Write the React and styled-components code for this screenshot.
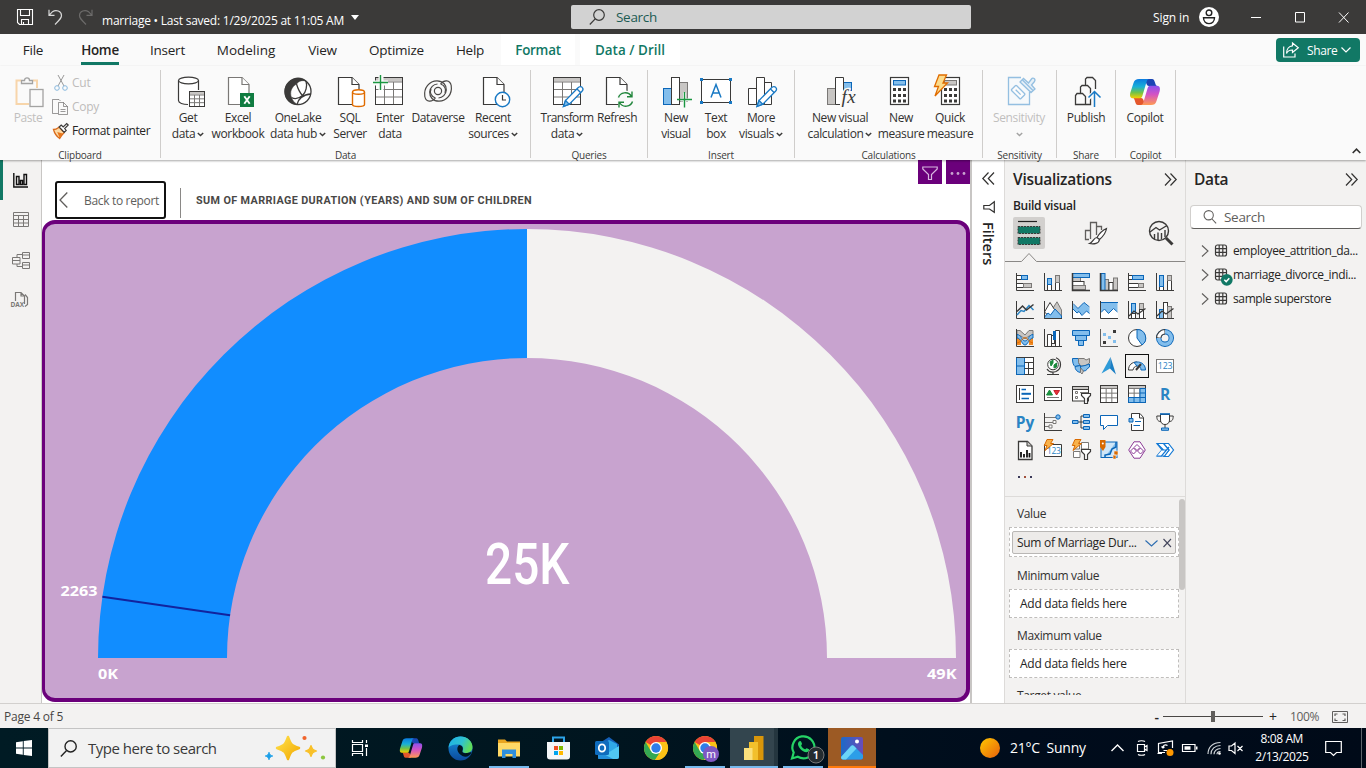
import React from "react";
import styled, { createGlobalStyle } from "styled-components";

const K = "#3b3a39";
const B = "#0b66b8";
const F = "#83beec";
const G = "#7a7876";
const L = "#c8c6c4";
const GREEN = "#117865";
const PURPLE = "#6b007b";

const GlobalStyle = createGlobalStyle`
  * { box-sizing: border-box; }
  html, body { margin: 0; padding: 0; }
  body {
    width: 1366px; height: 768px; overflow: hidden;
    font-family: "Open Sans", "Noto Sans", sans-serif;
    font-size: 12px; color: #252423; letter-spacing: -0.25px;
  }
  svg { display: block; flex: none; overflow: visible; }
`;

const Text = styled.span`
  display: block;
  flex: none;
  white-space: pre;
  font-size: ${(p) => p.$size || 12}px;
  font-weight: ${(p) => p.$weight || 400};
  letter-spacing: ${(p) => (p.$ls === undefined ? -0.25 : p.$ls)}px;
  line-height: ${(p) => p.$lh || 16}px;
  color: ${(p) => p.$color || "#252423"};
  margin-left: ${(p) => p.$ml || 0}px;
  padding-top: ${(p) => p.$pt || 0}px;
`;
const Spacer = styled.div`
  flex: none;
  width: ${(p) => p.$w || 0}px;
  height: ${(p) => p.$h || 0}px;
`;
const Fill = styled.div`
  flex: 1;
`;
const Window = styled.div`
  width: 1366px; height: 768px;
  display: flex; flex-direction: column;
  background: #f3f2f1;
`;

/* ---------- title bar ---------- */
const TitleBar = styled.header`
  height: 34px; flex: none;
  display: flex; align-items: center;
  background: #3b3a39;
  padding-left: 17px;
`;
const TitleLeft = styled.div`
  width: 554px; height: 34px; display: flex; align-items: center; flex: none;
`;
const TitleSearch = styled.div`
  width: 400px; height: 24px; flex: none;
  display: flex; align-items: center;
  background: #d2d2d2; border-radius: 2px;
  padding-left: 18px;
`;
const TitleRight = styled.div`
  flex: 1; display: flex; align-items: center; padding-left: 182px;
`;

/* ---------- tabs ---------- */
const TabBar = styled.nav`
  height: 32px; flex: none; display: flex; background: #fafafa;
  padding-left: 8px; align-items: flex-start;
`;
const Tab = styled.div`
  width: ${(p) => p.$w}px; height: 31px; flex: none;
  margin-right: ${(p) => p.$mr || 0}px;
  display: flex; justify-content: center;
  background: ${(p) => (p.$context ? "#fff" : "transparent")};
`;
const TabLabel = styled.span`
  height: 31px; line-height: 32px; font-size: ${(p) => (p.$bold ? 13.4 : 13.5)}px; white-space: nowrap;
  letter-spacing: ${(p) => (p.$ls === undefined ? -0.25 : p.$ls)}px;
  font-weight: ${(p) => (p.$bold ? 600 : 400)};
  color: ${(p) => (p.$context ? GREEN : "#252423")};
  box-shadow: ${(p) => (p.$active ? `inset 0 -3px 0 ${GREEN}` : "none")};
`;
const ShareButton = styled.div`
  width: 84px; height: 24px; margin: 4px 6px 0 auto;
  background: ${GREEN}; border-radius: 4px;
  display: flex; align-items: center; padding-left: 7px;
`;

/* ---------- ribbon ---------- */
const Ribbon = styled.section`
  height: 94px; flex: none; display: flex; background: #fafafa; padding-top: 4px;
  box-shadow: 0 1px 2px rgba(0,0,0,.35);
  position: relative; z-index: 2;
`;
const Group = styled.div`
  width: ${(p) => p.$w}px; height: 88px; flex: none;
  border-right: 1px solid #cfcdcb;
  display: flex; flex-direction: column;
`;
const GroupBody = styled.div`
  height: 76px; flex: none; display: flex; padding-left: ${(p) => p.$pl || 0}px;
`;
const GroupName = styled.div`
  font-size: 10px; line-height: 12px; padding-top: 1px; letter-spacing: -0.2px; text-align: center; color: #3b3a39;
  margin-top: 1px; height: 12px; padding-top: 2px;
`;
const RibbonItem = styled.div`
  width: ${(p) => p.$w}px; flex: none; padding-top: 6px;
  display: flex; flex-direction: column; align-items: center;
  opacity: ${(p) => (p.$off ? 0.45 : 1)};
`;
const ItemLine = styled.div`
  height: 16px; line-height: 18px; display: flex; align-items: center; gap: 2px;
  font-size: 12px; letter-spacing: ${(p) => (p.$tight ? -0.6 : -0.38)}px; white-space: nowrap;
  color: ${(p) => (p.$off ? "#7a7876" : "#323130")};
  margin-top: ${(p) => (p.$first ? 2 : 0)}px;
`;
const ClipList = styled.div`
  display: flex; flex-direction: column; padding: 1px 0 0 6px;
`;
const ClipRow = styled.div`
  height: 24px; display: flex; align-items: center; gap: 2px;
`;
const Collapse = styled.div`
  margin: 78px 5px 0 auto;
`;

const Ic = ({ w = 32, h, children }) => (
  <svg width={w} height={h || w} viewBox={`0 0 ${w} ${h || w}`} fill="none" stroke={K}>
    {children}
  </svg>
);
const Caret = () => (
  <svg width="7" height="5" viewBox="0 0 7 5" fill="none" stroke={K} strokeWidth="1.4">
    <path d="M.8 .9 3.5 3.6 6.2 .9" />
  </svg>
);
const Doc = ({ x = 6.5, color = K }) => (
  <g stroke={color} strokeWidth="1.2" fill="#fff" transform={`translate(${x} 1.5)`}>
    <path d="M0 0H13.5L20.5 7V27H0Z" />
    <path d="M13.5 0V7H20.5" />
  </g>
);
const Pencil = ({ x = 12, y = 10 }) => (
  <g transform={`translate(${x} ${y})`} stroke="#1979c4" strokeWidth="1.3">
    <path d="M.5 20.5 2.5 14.5 15 1.8C16.3.3 18.3.3 19.2 1.4 20.3 2.5 20.2 4 19 5.3L6.3 18.2Z" fill="#fff" />
    <path d="M.5 20.5 2.5 14.5 6.3 18.2Z" fill={F} />
    <path d="M14 3 17.8 6.8" />
  </g>
);
const Grid = ({ x, y, w, h, head }) => (
  <g transform={`translate(${x} ${y})`}>
    <rect width={w} height={h} fill="#fff" stroke={K} />
    <rect x=".5" y=".5" width={w - 1} height={head} fill={L} stroke="none" />
    <path
      stroke={G}
      d={`M0 ${head + 1}H${w}M0 ${head + 1 + (h - head - 1) / 3}H${w}M0 ${head + 1 + ((h - head - 1) * 2) / 3}H${w}M${w / 3} ${head + 1}V${h}M${(w * 2) / 3} ${head + 1}V${h}`}
    />
    <rect width={w} height={h} stroke={K} />
  </g>
);
const CalcPad = ({ x = 5.5, w = 18, fill = F, stroke = B }) => (
  <g transform={`translate(${x} 1.5)`}>
    <rect width={w} height="27" fill="#fff" strokeWidth="1.2" />
    <rect x="3" y="3" width={w - 6} height="4.5" fill={fill} stroke={stroke} />
    <path stroke={K} strokeWidth="3" strokeDasharray="3 2" d={`M2.5 12H${w - 2.5}M2.5 18H${w - 2.5}M2.5 23.5H${w - 2.5}`} />
  </g>
);
const CopilotMark = ({ size, id }) => (
  <svg width={size} height={size} viewBox="0 0 32 32">
    <defs>
      <linearGradient id={`${id}a`} x1="0" y1="0" x2="0" y2="1">
        <stop offset="0" stopColor="#0b7be0" />
        <stop offset=".4" stopColor="#18b0d8" />
        <stop offset=".7" stopColor="#6fc24a" />
        <stop offset="1" stopColor="#f8d000" />
      </linearGradient>
      <linearGradient id={`${id}b`} x1="0" y1="0" x2="0" y2="1">
        <stop offset="0" stopColor="#8b52f0" />
        <stop offset=".45" stopColor="#d452c4" />
        <stop offset="1" stopColor="#ff9a52" />
      </linearGradient>
    </defs>
    <path d="M20 3H23C25 3 25.5 5 26.3 7.5 27 9.6 27.3 10 29 10H20C17 10 17 5 16 3Z" fill="#1b45b4" />
    <path d="M12 29H9C7 29 6.5 27 5.8 24.5 5 22.3 5 22 3.5 22H12C15 22 15 27 16 29Z" fill="#e4572c" />
    <path d="M10 3H20.5C18.5 3 18 4.5 17.2 7L13.5 19.5C12.8 22 12 22.3 10 22.3H4C1 22.3 .6 19.5 1.4 16.5L4.5 7C5.5 4 7 3 10 3Z" fill={`url(#${id}a)`} />
    <path d="M22 29H11.5C13.5 29 14 27.5 14.8 25L18.5 12.5C19.2 10 20 9.7 22 9.7H28C31 9.7 31.4 12.5 30.6 15.5L27.5 25C26.5 28 25 29 22 29Z" fill={`url(#${id}b)`} />
  </svg>
);

const swirlArm = "M13.5 22C10 26.5 4 26.5 2.8 20.5 1.5 11.5 7.5 4.8 15 4.8 21 4.8 24.5 9 24.3 14 24 18.5 20.5 21.8 16.5 22M9 13C7.5 16.5 9 20.5 13.5 22";

const ribbonIcons = {
  paste: (
    <Ic>
      <path d="M9 4.5H4.5V28H17M21 4.5H25V12" stroke="#f5a94a" strokeWidth="2" />
      <path d="M9.5 7.5V4.5H12.5C12.5 1 17.5 1 17.5 4.5H20.5V7.5Z" fill="#fafafa" strokeWidth="1.3" />
      <rect x="18" y="13.5" width="13" height="17" fill="#fafafa" strokeWidth="1.3" />
    </Ic>
  ),
  getData: (
    <Ic>
      <path d="M6.5 4.5V25C6.5 27.5 11 28.5 17 28.5V15H26.5V4.5" fill="#fff" stroke="none" />
      <ellipse cx="16.5" cy="4.5" rx="10" ry="3.3" fill="#fff" strokeWidth="1.2" />
      <path d="M6.5 4.5V24.5C6.5 27 11 28.5 16 28.5M26.5 4.5V14" strokeWidth="1.2" />
      <Grid x={17.5} y={15.5} w={15} h={15} head={2.5} />
    </Ic>
  ),
  excel: (
    <Ic>
      <Doc x={6.5} color={G} />
      <rect x="18" y="17" width="14" height="14" fill="#107c41" stroke="none" />
      <path d="M22.3 20.3 27.7 27.8M27.7 20.3 22.3 27.8" stroke="#fff" strokeWidth="1.9" />
    </Ic>
  ),
  oneLake: (
    <Ic>
      <circle cx="16" cy="15.5" r="13" fill="#fff" strokeWidth="1.3" />
      <path d="M9.5 4.2C14 .8 20 1.2 24 5 20 4 16.5 5 14.5 8 9.5 11 7.5 16 9.5 21.5 10.5 24.5 12.5 26.5 15 28.5 8.5 28.5 3 23.5 2.8 16.5 2.6 11 5.5 6.5 9.5 4.2Z" fill={K} strokeWidth=".5" />
      <path d="M14.5 8C16 13 18 17 20.5 19.5M15 28.5C16 23 21 18.5 29 18M24 5C25.5 10 24 16 20.5 19.5 17 22.5 13 23.5 9.5 21.5" strokeWidth="1.3" />
    </Ic>
  ),
  sql: (
    <Ic>
      <Doc x={4.5} />
      <path d="M18.5 16V28.5C18.5 29.8 21 30.5 24.5 30.5S30.5 29.8 30.5 28.5V16" fill="#fff" stroke="#e06c00" strokeWidth="1.4" />
      <ellipse cx="24.5" cy="16" rx="6" ry="2.3" fill="#fff" stroke="#e06c00" strokeWidth="1.4" />
    </Ic>
  ),
  enter: (
    <Ic>
      <Grid x={1.5} y={1.5} w={27} h={27} head={3.5} />
      <path d="M7 0V14M0 7H14" stroke="#fafafa" strokeWidth="5" />
      <path d="M6.5-1V14M-1 6.5H14" stroke="#1a9640" strokeWidth="1.4" />
    </Ic>
  ),
  dataverse: (
    <Ic>
      <g strokeWidth="1.2" stroke="#4a4846">
        <circle cx="16" cy="15" r="3.6" />
        <path d={swirlArm} />
        <path d={swirlArm} transform="rotate(180 16 15)" />
      </g>
    </Ic>
  ),
  recent: (
    <Ic>
      <Doc x={6.5} />
      <circle cx="25.5" cy="23.5" r="7.2" fill="#fff" stroke="#1979c4" strokeWidth="1.4" />
      <path d="M25.5 19V24H29" strokeWidth="1.2" />
    </Ic>
  ),
  transform: (
    <Ic>
      <Grid x={2.5} y={1.5} w={27} h={27} head={3.5} />
      <Pencil x={12} y={10} />
    </Ic>
  ),
  refresh: (
    <Ic>
      <Doc x={5.5} />
      <circle cx="24.5" cy="23.5" r="9" fill="#fafafa" stroke="none" />
      <path d="M17.5 21.5C19 16.5 27 14.5 30.5 20.5M31 15.5V20.8H26M31.5 25.5C30 30.5 22 32.5 18.5 26.5M18 31.5V26.2H23" stroke="#21863c" strokeWidth="1.4" />
    </Ic>
  ),
  newVisual: (
    <Ic>
      <rect x="3.5" y="12.5" width="8" height="16" fill={F} stroke={B} />
      <rect x="19.5" y="6.5" width="8" height="19" fill={L} stroke={G} />
      <rect x="11.5" y="1.5" width="8" height="27" fill="#fff" />
      <path d="M24.5 16.5V31.5M20.5 24H32" stroke="#fafafa" strokeWidth="3" />
      <path d="M24.5 16V31.5M17 23.5H32" stroke="#1a9640" strokeWidth="1.4" />
    </Ic>
  ),
  textBox: (
    <Ic>
      <rect x="1.5" y="3.5" width="29" height="23" fill="#fff" />
      <path d="M11 21.5 16 8.5 21 21.5M12.7 17H19.3" stroke="#1979c4" strokeWidth="1.5" />
      <path d="M0 2h3v3h-3zM29 2h3v3h-3zM0 25h3v3h-3zM29 25h3v3h-3z" fill="#1979c4" stroke="none" />
    </Ic>
  ),
  more: (
    <Ic>
      <path d="M3.5 12.5H11.5V28.5H3.5ZM19.5 6.5H26.5V28.5H19.5ZM11.5 1.5H19.5V28.5H11.5Z" fill="#fff" />
      <Pencil x={11.5} y={10} />
    </Ic>
  ),
  visualCalc: (
    <Ic>
      <rect x="3.5" y="12.5" width="8" height="16" fill={L} stroke={G} />
      <rect x="19.5" y="6.5" width="8" height="8" fill={F} stroke={B} />
      <path d="M16 28.5H11.5V1.5H19.5V14" fill="#fff" />
      <text x="17.5" y="27" fontFamily="Liberation Serif, serif" fontStyle="italic" fontSize="19" letterSpacing="0.5" fill={K} stroke="#fafafa" strokeWidth="3" paintOrder="stroke">fx</text>
    </Ic>
  ),
  calc: (
    <Ic>
      <CalcPad x={5.5} />
    </Ic>
  ),
  quick: (
    <Ic>
      <CalcPad x={7.5} fill={L} stroke={G} />
      <path d="M5-1H12.5L9 7H13.5L1 20 4.5 10.5H.5Z" fill="#fcdc8c" stroke="#e06c00" strokeWidth="1.3" />
    </Ic>
  ),
  sensitivity: (
    <Ic>
      <g stroke="#1979c4" strokeWidth="1.3">
        <path d="M18 1.5H5.5V28.5H26.5V16" fill="#f2f8fd" />
        <g transform="translate(15.5 16.5) rotate(-45)">
          <rect x="-3.5" y="-7" width="7" height="13" rx="1" fill="#fff" />
          <path d="M0-4V3" />
        </g>
        <path d="M17 6 20.5 2.5 25.5 7 28.5 3C30 1 33 3 31.5 5.5L28.5 9 32 13 28 16.5Z" fill="#cfe4f5" />
        <path d="M19.5 4 30 14.5" />
      </g>
    </Ic>
  ),
  publish: (
    <Ic>
      <path d="M5.5 28.5V19.5L7 17.5H12.5L15.5 20.5V28.5ZM10.5 17V11L12 9.5H17.5L20.5 12.5V28.5H15.5M15.5 9V3L17 1.5H22.5L25.5 4.5V13" strokeWidth="1.3" />
      <path d="M24.5 31V17M18 22.5 24.5 16 31 22.5" stroke="#fafafa" strokeWidth="4" />
      <path d="M24.5 31V15.5M18.5 21.5 24.5 15.5 30.5 21.5" stroke="#1979c4" strokeWidth="1.5" />
    </Ic>
  ),
  copilot: <CopilotMark size={32} id="rc" />,
};

const ribbonGroups = [
  { name: "Data", w: 370, pl: 5, items: [
    ["getData", 44, "Get", "data", true],
    ["excel", 56, "Excel", "workbook"],
    ["oneLake", 64, "OneLake", "data hub", true],
    ["sql", 40, "SQL", "Server"],
    ["enter", 40, "Enter", "data"],
    ["dataverse", 56, "Dataverse"],
    ["recent", 54, "Recent", "sources", true],
  ] },
  { name: "Queries", w: 117, pl: 8, items: [
    ["transform", 56, "Transform", "data", true],
    ["refresh", 44, "Refresh"],
  ] },
  { name: "Insert", w: 147, pl: 8, items: [
    ["newVisual", 40, "New", "visual"],
    ["textBox", 40, "Text", "box"],
    ["more", 50, "More", "visuals", true],
  ] },
  { name: "Calculations", w: 188, pl: 8, items: [
    ["visualCalc", 74, "New visual", "calculation", true],
    ["calc", 48, "New", "measure"],
    ["quick", 50, "Quick", "measure"],
  ] },
  { name: "Sensitivity", w: 74, pl: 0, items: [["sensitivity", 72, "Sensitivity", "", true, true]] },
  { name: "Share", w: 59, pl: 0, items: [["publish", 58, "Publish"]] },
  { name: "Copilot", w: 60, pl: 0, items: [["copilot", 58, "Copilot"]] },
];

/* ---------- workspace ---------- */
const Workspace = styled.main`
  height: 543px; flex: none; display: flex; position: relative; z-index: 1;
`;
const Rail = styled.aside`
  width: 42px; flex: none; background: #f3f2f1; border-right: 1px solid #c8c6c4;
  display: flex; flex-direction: column;
`;
const RailItem = styled.div`
  height: 40px; display: flex; align-items: center; padding-left: ${(p) => p.$pl}px; padding-bottom: ${(p) => p.$pb || 0}px;
  border-left: ${(p) => (p.$active ? `3px solid ${GREEN}` : "0")};
`;
const Canvas = styled.section`
  width: 930px; flex: none; background: #fff; border-right: 2px solid #c8c6c4;
  display: flex; flex-direction: column;
`;
const FocusHeader = styled.div`
  height: 60px; display: flex; align-items: flex-start; padding-left: 13px; flex: none;
`;
const BackButton = styled.div`
  width: 111px; height: 38px; margin-top: 21px; flex: none;
  border: 2px solid #111; border-radius: 3px;
  display: flex; align-items: center; padding-left: 2px;
`;
const HeaderRule = styled.div`
  width: 1px; height: 30px; margin: 28px 15px 0 14px; background: #8a8886; flex: none;
`;
const VisualTitle = styled.div`
  font-family: Roboto, sans-serif; font-weight: 700; font-size: 10.8px; letter-spacing: 0.38px;
  color: #4a4846; line-height: 16px; margin-top: 33px; white-space: nowrap; width: 340px;
`;
const VisualActions = styled.div`
  display: flex; gap: 4px; margin-left: auto;
`;
const ActionButton = styled.div`
  width: 24px; height: 24px; padding-top: 2px; background: ${PURPLE}; display: flex; align-items: center; justify-content: center;
`;
const GaugeCard = styled.div`
  width: 928px; height: 482px; flex: none;
  border: 4px solid ${PURPLE}; border-left-width: 3px; border-radius: 13px; background: #c8a3cf;
`;
const FiltersPane = styled.aside`
  width: 32px; flex: none; background: #fff; display: flex; flex-direction: column; align-items: center;
  padding-top: 12px;
`;
const FiltersLabel = styled.div`
  writing-mode: vertical-rl; font-size: 14.5px; font-weight: 600; letter-spacing: 0; line-height: 16px;
  margin-top: 9px; color: #252423;
`;
const Pane = styled.aside`
  width: 181px; flex: none; border-left: 1px solid #dddbd9; background: #f3f2f1;
  display: flex; flex-direction: column;
`;
const PaneHeader = styled.div`
  height: 38px; flex: none; display: flex; align-items: center; justify-content: space-between;
  padding: 0 8px 0 8px;
`;
const BuildTabs = styled.div`
  height: 35px; display: flex; padding-left: 8px; flex: none; margin-top: 3px;
`;
const BuildTab = styled.div`
  width: 32px; height: 32px; margin-right: ${(p) => p.$mr}px; flex: none;
  background: ${(p) => (p.$active ? "#d2d0ce" : "transparent")}; border-radius: 2px;
  display: flex; align-items: center; justify-content: center;
`;
const VisualGrid = styled.div`
  display: grid; grid-template-columns: repeat(6, 28px); grid-auto-rows: 28px; padding-left: 6px; margin-top: 6px;
`;
const VisualCell = styled.div`
  display: flex; align-items: center; justify-content: center;
  width: 24px; height: 24px; margin: 2px;
  border: 1px solid ${(p) => (p.$active ? "#111" : "transparent")};
`;
const MoreDots = styled.div`
  display: flex; gap: 4px; padding: 12px 0 0 13px; height: 33px; flex: none;
  border-bottom: 1px solid #dddbd9;
`;
const Dot = styled.i`
  width: 2px; height: 2px; background: ${(p) => p.$c || "#3b3a59"};
`;
const Wells = styled.div`
  height: 198px; overflow: hidden; display: flex; justify-content: space-between; flex: none;
`;
const WellList = styled.div`
  width: 170px; margin-left: 4px;
`;
const WellLabel = styled.div`
  font-size: 12px; letter-spacing: -0.35px; line-height: 16px; padding-left: 8px; color: #323130;
  margin-top: ${(p) => p.$mt}px;
`;
const Well = styled.div`
  height: ${(p) => (p.$filled ? 30 : 29)}px; width: 170px; border: 1px dashed #c0bebc; background: #fff; margin-top: 5px;
  display: flex; align-items: center; padding-left: ${(p) => (p.$filled ? 2 : 10)}px;
`;
const Chip = styled.div`
  width: 164px; height: 23px; background: #edebe9; border: 1px solid #b9b7b5; border-radius: 2px;
  display: flex; align-items: center; padding-left: 4px; margin-top: 1px;
`;
const ScrollThumb = styled.div`
  width: 6px; height: 91px; margin-top: 2px; border-radius: 3px; background: #c8c6c4;
`;
const DataSearch = styled.div`
  width: 172px; height: 24px; margin: 7px 0 10px 4px; background: #fff; flex: none;
  border: 1px solid #d1cfcd; border-bottom-color: #605e5c; border-radius: 4px;
  display: flex; align-items: center; padding-left: 12px; gap: 7px;
`;
const TableRow = styled.div`
  height: 24px; display: flex; align-items: center; padding-left: 15px;
`;

/* ---------- status bar ---------- */
const StatusBar = styled.footer`
  height: 25px; flex: none; background: #f3f2f1; border-top: 1px solid #d2d0ce;
  display: flex; align-items: center; padding: 1px 18px 0 4px;
`;
const ZoomTrack = styled.div`
  width: 100px; height: 1px; background: #484644; display: flex; align-items: center; margin: 0 6px 1px 4px;
`;
const ZoomThumb = styled.div`
  width: 4px; height: 11px; background: #605e5c; margin-left: 48px;
`;

/* ---------- taskbar ---------- */
const Taskbar = styled.div`
  height: 40px; flex: none; display: flex; color: #fff;
  background: linear-gradient(90deg, #001b24 0, #00151f 45%, #000c1c 75%, #000a18 100%);
`;
const StartButton = styled.div`
  width: 48px; display: flex; align-items: center; justify-content: center;
`;
const TaskSearch = styled.div`
  width: 288px; height: 40px; background: #f2f2f2; border: 1px solid #c4c4c4;
  display: flex; align-items: center; padding-left: 11px; flex: none;
`;
const TaskItem = styled.div`
  width: 48px; margin-right: ${(p) => p.$mr || 1}px; height: 40px; flex: none; display: flex; align-items: center; justify-content: center;
  background: ${(p) => p.$bg || "transparent"};
`;
const OpenItem = styled(TaskItem)`
  box-shadow: inset 0 -2px 0 ${(p) => p.$line};
`;
const RunningItem = styled(TaskItem)`
  background-image: linear-gradient(#76b9ed, #76b9ed);
  background-size: 40px 2px; background-position: 4px 38px; background-repeat: no-repeat;
`;
const Tray = styled.div`
  display: flex; align-items: center; margin-left: auto; width: 386px; flex: none;
`;
const Clock = styled.div`
  width: 56px; display: flex; flex-direction: column; align-items: center; margin-left: 11px; flex: none;
`;
const TrayEdge = styled.div`
  width: 1px; height: 40px; background: #5d656c; margin-left: auto; margin-right: 4px;
`;

/* ---------- visual type icons ---------- */
const Ax = () => <path d="M.5 0V17.5H18" />;
const V = ({ children }) => <Ic w={18}>{children}</Ic>;
const Bolt = () => <path d="M3-1.5H9L6.5 2.5H9.5L1 9.5 3 4.5H.3Z" fill="#f8b24c" stroke="#d96a00" />;
const Funnel = () => <path d="M9.5 8.5H18.5V10.5L15.5 13.5V18.5H12.5V13.5L9.5 10.5Z" fill="#fff" strokeWidth="1.2" />;
const BLUE_TEXT = "#2a84c4";
const visuals = [
  <V key="0"><Ax /><rect x=".5" y="2.5" width="5" height="4" fill="#fff" /><rect x="5.5" y="2.5" width="6" height="4" fill={F} stroke={B} /><rect x=".5" y="10.5" width="7" height="4" fill="#fff" /><rect x="7.5" y="10.5" width="8" height="4" fill={L} stroke={G} /></V>,
  <V key="1"><Ax /><rect x="3.5" y="10.5" width="4" height="7" fill="#fff" /><rect x="3.5" y="5.5" width="4" height="6" fill={F} stroke={B} /><rect x="11.5" y="9.5" width="4" height="8" fill="#fff" /><rect x="11.5" y="2.5" width="4" height="7" fill={L} stroke={G} /></V>,
  <V key="2"><rect x=".5" y="4.5" width="8" height="4" fill={L} stroke={G} /><rect x=".5" y="8.5" width="11.5" height="4" fill="#fff" /><rect x=".5" y="12.5" width="13" height="4" fill={L} stroke={G} /><rect x=".5" y=".5" width="17" height="4" fill={F} stroke={B} /><path d="M.5 0V17.5H18" strokeWidth="1.5" /></V>,
  <V key="3"><rect x="4.5" y="6.5" width="4" height="11" fill={L} stroke={G} /><rect x="9" y="9.5" width="4" height="8" fill="#fff" /><rect x="13.5" y="5" width="4" height="12" fill={L} stroke={G} /><rect x="1" y=".5" width="4" height="17" fill={F} stroke={B} /><path d="M.5 0V17.5H18" strokeWidth="1.5" /></V>,
  <V key="4"><Ax /><rect x=".5" y="2.5" width="4" height="4" fill="#fff" /><rect x="4.5" y="2.5" width="11" height="4" fill={F} stroke={B} /><rect x=".5" y="10.5" width="10" height="4" fill="#fff" /><rect x="10.5" y="10.5" width="5" height="4" fill={L} stroke={G} /></V>,
  <V key="5"><Ax /><rect x="3.5" y="13.5" width="4" height="4" fill="#fff" /><rect x="3.5" y="2.5" width="4" height="11" fill={F} stroke={B} /><rect x="11.5" y="7.5" width="4" height="10" fill="#fff" /><rect x="11.5" y="2.5" width="4" height="5" fill={L} stroke={G} /></V>,
  <V key="6"><Ax /><path d="M1 14 5 9.5 8 10.5 13 4.5 17.5 9" stroke={BLUE_TEXT} strokeWidth="1.5" /><path d="M1 10.5 6.5 5 10.5 9 17.5 3.5" strokeWidth="1.5" /></V>,
  <V key="7"><path d="M9 7 13 .8 17.5 9V17H10Z" fill={L} stroke={G} /><path d="M.5 11 6 1.5 14 14 7 17Z" fill="#fff" /><path d="M.5 16 4 12 6.5 14 11 8 17.5 15V17.5H.5Z" fill={F} stroke={B} /><Ax /></V>,
  <V key="8"><path d="M1 3.5 6 7.5 12 1.5 17.5 7V12.5L14 10.5 9 15 1 8Z" fill={F} stroke="none" /><path d="M1 8 5 12 7 10.5 10 14.5 14.5 10 17.5 12.5V17H1Z" fill="#fff" stroke="none" /><path d="M1 2.5 6 7.5 12 1.5 17.5 6M1 8 5 12 7 10.5 10 14.5 14.5 10 17.5 12.5" stroke={B} /><Ax /></V>,
  <V key="9"><path d="M1 1H17.5V11L13.5 7.5 8.5 12.5 4.5 8 1 11.5Z" fill={F} stroke="none" /><path d="M1 11.5 4.5 8 8.5 12.5 13.5 7.5 18 11V17H1Z" fill="#fff" stroke="none" /><path d="M1 1.5H18M1 11.5 4.5 8 8.5 12.5 13.5 7.5 17.5 11" stroke={B} /><Ax /></V>,
  <V key="10"><rect x="3.5" y="2.5" width="4" height="10" fill={F} stroke={B} /><rect x="3.5" y="12.5" width="4" height="5" fill="#fff" /><rect x="11.5" y="2.5" width="4" height="6" fill={L} stroke={G} /><rect x="11.5" y="8.5" width="4" height="9" fill="#fff" /><Ax /><path d="M1 15 6 10 10 13 17.5 7.5" strokeWidth="1.3" /></V>,
  <V key="11"><rect x="3.5" y="8.5" width="4" height="9" fill={F} stroke={B} /><rect x="7.5" y="1.5" width="4" height="16" fill="#fff" /><rect x="11.5" y="5.5" width="4" height="12" fill={L} stroke={G} /><Ax /><path d="M1 15 6 10 10 13 17.5 7.5" strokeWidth="1.3" /></V>,
  <V key="12"><path d="M1 1.5H4L9 6 13 1.5H17V6L13 7 9 10 5 7 1 6Z" fill={L} stroke={G} /><path d="M1 9H5V16H1ZM13 9H17V16H13Z" fill="#f08a24" stroke="none" /><path d="M1 5.5C5 5.5 6 12 9 12S13 5.5 17 5.5V9C13 9 12 16 9 16S5 9 1 9Z" fill={F} stroke={B} /><path d="M1 14C5 14 6 8.5 9 8.5S13 14 17 14" stroke="#e06c00" /><Ax /></V>,
  <V key="13"><path d="M3.5 5.5H7.5V17.5H3.5ZM11.5 1.5H15.5V17.5H11.5Z" fill="#fff" /><rect x="7.5" y="6.5" width="3" height="8" fill="#fff" /><rect x="9.5" y="2.5" width="2" height="8" fill={B} stroke={B} /><Ax /></V>,
  <V key="14"><path d="M.5 1.5H17.5V6.5H.5ZM3.5 6.5H14.5V11.5H3.5ZM6.5 11.5H11.5V16.5H6.5Z" fill={F} stroke={B} /></V>,
  <V key="15"><path d="M.5 0V17.5H18" stroke="#605e5c" /><path d="M13 1h3v3h-3zM3 12h3v3h-3z" fill={K} stroke="none" /><path d="M3 4h3v3h-3zM8 7h3v3h-3zM13 11h3v3h-3z" fill={F} stroke="none" /></V>,
  <V key="16"><circle cx="9" cy="9" r="8.5" fill="#fff" /><path d="M9 .5A8.5 8.5 0 0 1 14 16L9 9Z" fill={F} stroke={B} /></V>,
  <V key="17"><circle cx="9" cy="9" r="6.3" strokeWidth="5.4" stroke={B} /><circle cx="9" cy="9" r="6.3" strokeWidth="3.6" stroke={F} /><path d="M2.7 9A6.3 6.3 0 0 1 9 2.7" strokeWidth="5.4" stroke={K} /><path d="M2.8 8.5A6.3 6.3 0 0 1 8.5 2.8" strokeWidth="3.4" stroke="#fff" /></V>,
  <V key="18"><rect x=".5" y=".5" width="17" height="17" fill="#fff" /><path d="M.5.5H8.5V17.5H.5Z" fill={F} stroke={B} /><path d="M.5 9H8.5" stroke={B} /><path d="M8.5 5.5H17.5M8.5 11.5H12.5M12.5 5.5V17.5M12.5 11.5H17.5M.5.5H17.5V17.5H8.5" /></V>,
  <V key="19"><circle cx="9" cy="7.5" r="5.3" fill="#fff" /><path d="M6 5 9 3 9 6 7 9ZM10 8 12.5 6 12.5 10 10 11Z" fill="#1a8a3c" stroke="#1a8a3c" /><path d="M12 .8C18 3 18 12 12 14.5 8 15.8 4.5 14.5 3 12M9 15V17.5M3 17.5H15" strokeWidth="1.2" /></V>,
  <V key="20"><path d="M.5 1.5H6.5V5.5L8.5 8.5 3 9.5C1 8 .5 5 .5 1.5Z" fill={F} stroke={B} /><path d="M6.5 1.5H12L14 3 17.5 1.5V6L13 9H8.5L6.5 5.5Z" fill={L} stroke={G} /><path d="M13 8.5 17.5 7V10C15 11 15 14 12 14H10.5L8 9.5Z" fill={F} stroke={B} /><path d="M3 9.5 8.5 8.5V15.5C5 15 3 12.5 3 9.5Z" fill={F} stroke={B} /><path d="M8.5 11 11.5 14 10 17 8.5 15.5Z" fill={L} stroke={G} /></V>,
  <V key="21"><path d="M10.5 0 1.5 16.5 10 11.5Z" fill="#2f9bd8" stroke="none" /><path d="M10.5 0 16 17.5 10 11.5Z" fill="#1b7fc4" stroke="none" /></V>,
  <V key="22"><path d="M.5 13C.5 8 4 5 9 5L9 9C7 9 5.5 10.5 5 13Z" fill="#fff" /><path d="M6 5.5C12 3.5 17.5 7 17.5 13H13C13 10.5 11.5 9 9 9Z" fill={F} stroke={B} /><path d="M8 13 13 7" strokeWidth="2" /></V>,
  <V key="23"><rect x=".5" y="2.5" width="17" height="13" fill="#fff" stroke={G} /><text x="1.8" y="12.4" fontFamily="Open Sans, sans-serif" fontSize="8.8" letterSpacing="-0.2" fill={BLUE_TEXT} stroke="none">123</text></V>,
  <V key="24"><rect x=".5" y=".5" width="17" height="17" fill="#fff" /><path d="M3.5 3V15" stroke={K} /><path d="M5.5 4.5H10M5.5 13.5H13" stroke={B} strokeWidth="1.5" /><path d="M5.5 8.8H15" stroke={B} strokeWidth="2" /></V>,
  <V key="25"><rect x=".5" y="2.5" width="17" height="13" fill="#fff" /><path d="M2.5 10 5.5 5 8.5 10Z" fill="#1a9640" stroke="#1a8a3c" /><path d="M9.8 5.5H15.5L12.6 10Z" fill="#e8303a" stroke="#c4202a" /><path d="M3 12.5H15" stroke={G} /></V>,
  <V key="26"><rect x=".5" y="1.5" width="16" height="14.5" fill="#fff" /><path d="M1 2H16V4.5H1Z" fill={L} stroke="none" /><path d="M.5 4.5H16.5" /><path d="M3.5 6.5h2v2h-2zM3.5 11.5h2v2h-2z" stroke={G} /><path d="M8 7.5H16" stroke={G} /><Funnel /></V>,
  <V key="27"><Grid x={0.5} y={0.5} w={17} h={17} head={2} /></V>,
  <V key="28"><Grid x={0.5} y={0.5} w={17} h={17} head={2} /><path d="M12 3.5H17.5V17.5H.5V12.5H12Z" fill={F} stroke={B} /><path d="M6 12.5V17M12 8H17M12 12.5V17.5M12 12.5H17" stroke={B} /></V>,
  <Text key="29" $size={15.5} $weight={700} $color={BLUE_TEXT}>R</Text>,
  <Text key="30" $size={15.5} $weight={700} $color={BLUE_TEXT} $ls={-0.1}>Py</Text>,
  <V key="31"><Ax /><path d="M1 4.5H12M1 9.5H9M1 13.5H5" stroke={G} /><circle cx="14" cy="4" r="2.2" fill={F} stroke={B} /><path d="M9 7.5h3v3h-3zM5 12h3v3h-3z" fill="#fff" stroke={G} /></V>,
  <V key="32"><path d="M6 9H9M9 3V15M9 3H12M9 9H12M9 15H12" /><path d="M.5 7.5H6V10.5H.5ZM11.5 1.5H17.5V4.5H11.5ZM11.5 7.5H17.5V10.5H11.5ZM11.5 13.5H17.5V16.5H11.5Z" fill={F} stroke={B} /></V>,
  <V key="33"><path d="M.5 2.5H17.5V12.5H7.5L3.5 16.5V12.5H.5Z" fill="#fff" stroke={B} /></V>,
  <V key="34"><path d="M3.5 6V.5H12L15.5 4.5V17.5H3.5V11" fill="#fff" /><path d="M11.5.5V5H15.5" /><path d="M1 5.5h4v3.5h-4z" fill={F} stroke={B} /><path d="M7 8.5H13M5.5 12.5H12" stroke={B} /></V>,
  <V key="35"><path d="M4.5 1.5H13.5V7C13.5 10 11.5 11.5 9 11.5S4.5 10 4.5 7Z" fill="#fff" /><path d="M4.5 3H.8C.8 7 2 8.5 5 8.5M13.5 3H17.2C17.2 7 16 8.5 13 8.5M9 11.5V15" /><path d="M4 1H14" stroke={B} strokeWidth="1.6" /><path d="M5.5 15H12.5V17.3H5.5Z" fill={F} stroke={B} /></V>,
  <V key="36"><path d="M2.5.5H11.5L16 5V18.5H2.5Z" fill="#fff" strokeWidth="1.3" /><path d="M11 .5V5H16" fill={L} /><path d="M5 11V16.5M8 13V16.5M11 9V16.5M13.5 12V16.5" stroke="#111" strokeWidth="1.8" /></V>,
  <V key="37"><path d="M.5 3.5H17.5V15.5H.5Z" fill="#fff" /><text x="3" y="13" fontFamily="Open Sans, sans-serif" fontSize="8.5" letterSpacing="-0.3" fill={BLUE_TEXT} stroke="none">123</text><Bolt /></V>,
  <V key="38"><path d="M9.5 1.5H16.5V8H9.5ZM1.5 10.5H8V16.5H1.5ZM4 1.5H7.5V8H1.5" fill="#fff" stroke={G} /><Funnel /><Bolt /></V>,
  <V key="39"><rect x="1" y="1" width="16" height="15.5" fill="#cfe6f7" stroke={B} /><path d="M16 1V6L12 8 10 13 5 14V16" stroke={B} fill={F} strokeWidth="1.5" /><path d="M0-1H5.5V6L3 10 0 6Z" fill="#d96a00" stroke="none" /><circle cx="2.8" cy="2.5" r="1" fill="#fff" stroke="none" /><path d="M14 10h4v4h-4zM13 14h3v4h-3z" fill="#d96a00" stroke="#f3f2f1" strokeWidth=".6" /></V>,
  <V key="40"><g stroke="#8c3a96" fill="#fff"><path d="M6 .8H12L17.3 9 12 17.2H6L.7 9Z" /><path d="M9 3.5 12 6.500 9 9.5 6 6.500ZM5.500 7 8.500 10 5.500 13 2.500 10ZM12.500 7 15.500 10 12.500 13 9.500 10Z" /></g></V>,
  <V key="41"><g stroke="#1479d4" fill="#fff" strokeWidth="1.2"><path d="M7.5 2.5H12.5L17.5 9 12.5 15.5H8L13 9Z" /><path d="M1 2.5H7.5L13 9 8.5 15H1L6 9Z" /><path d="M6 9H10.5L5.5 15H1M1 2.5 7.5 9M10.5 9 13 6" /></g></V>,
];

const Magnifier = ({ size = 16, color = K, flip, w = 1.2 }) => (
  <svg width={size} height={size} viewBox="0 0 16 16" fill="none" stroke={color} strokeWidth={w}>
    {flip ? <path d="M10.3 10.3 15 15.3" /> : <path d="M6.2 9.8 .8 15.5" />}
    <circle cx={flip ? 6.5 : 10} cy="6" r="5.3" />
  </svg>
);
const DoubleChevron = ({ left }) => (
  <svg width="13" height="13" viewBox="0 0 13 13" fill="none" stroke="#323130" strokeWidth="1.2">
    <path d={left ? "M6.5.5.8 6.5 6.5 12.5M12 .5 6.3 6.5 12 12.5" : "M1 .5 6.7 6.5 1 12.5M6.5.5 12.2 6.5 6.5 12.5"} />
  </svg>
);

const cx = 482, cy = 434, ro = 429, ri = 300;
const targetAngle = (8.2 * Math.PI) / 180;
const Gauge = () => (
  <svg width="921" height="474" viewBox="0 0 921 474">
    <path d={`M${cx - ro} ${cy}A${ro} ${ro} 0 0 1 ${cx} ${cy - ro}V${cy - ri}A${ri} ${ri} 0 0 0 ${cx - ri} ${cy}Z`} fill="#118dff" />
    <path d={`M${cx} ${cy - ro}A${ro} ${ro} 0 0 1 ${cx + ro} ${cy}H${cx + ri}A${ri} ${ri} 0 0 0 ${cx} ${cy - ri}Z`} fill="#f3f2f1" />
    <line
      x1={cx - ro * Math.cos(targetAngle)} y1={cy - ro * Math.sin(targetAngle)}
      x2={cx - ri * Math.cos(targetAngle)} y2={cy - ri * Math.sin(targetAngle)}
      stroke="#12239e" strokeWidth="2"
    />
    <g fill="#fff" fontFamily="Open Sans, sans-serif" fontSize="14" fontWeight="700" letterSpacing="0">
      <text x="52.5" y="371.5" textAnchor="end" textLength="37" lengthAdjust="spacingAndGlyphs">2263</text>
      <text x="53" y="455" textLength="20" lengthAdjust="spacingAndGlyphs">0K</text>
      <text x="882" y="455" textLength="29.5" lengthAdjust="spacingAndGlyphs">49K</text>
      <text x="440" y="359.5" textLength="84.5" lengthAdjust="spacingAndGlyphs" fontFamily="Roboto, sans-serif" fontSize="57" fontWeight="500">25K</text>
    </g>
  </svg>
);

const ChromeMark = ({ badge }) => (
  <svg width="26" height="26" viewBox="0 0 26 26">
    <circle cx="13" cy="13" r="12" fill="#fbc116" />
    <path d="M13 13 2.6 7A12 12 0 0 1 23.4 7Z" fill="#ea4335" />
    <path d="M2.6 7A12 12 0 0 0 12 25L18 16 7.5 15.5Z" fill="#34a853" />
    <path d="M13 7H23.4A12 12 0 0 1 12 25L18 16Z" fill="#fbc116" />
    <circle cx="13" cy="13" r="6" fill="#fff" />
    <circle cx="13" cy="13" r="4.7" fill="#2f7de9" />
    {badge && (
      <g>
        <circle cx="19" cy="19" r="8" fill="#7e57c2" />
        <text x="19" y="22.5" textAnchor="middle" fontFamily="Roboto, sans-serif" fontSize="11" fill="#fff">m</text>
      </g>
    )}
  </svg>
);

const SparkShape = ({ x, y, s, fill }) => (
  <path transform={`translate(${x} ${y}) scale(${s})`} d="M0-1C.25-.3.3-.25 1 0 .3.25.25.3 0 1-.25.3-.3.25-1 0-.3-.25-.25-.3 0-1Z" fill={fill} stroke={fill} strokeWidth=".22" strokeLinejoin="round" />
);

const TableGlyph = ({ checked }) => (
  <svg width="18" height="16" viewBox="0 0 18 16" fill="none" stroke={K} strokeWidth="1.2">
    <rect x="1.5" y="2" width="11" height="11" rx="2" />
    <path d="M1.5 5.7H12.5M1.5 9.3H12.5M5.2 2V13M8.8 2V13" />
    {checked && (
      <g>
        <circle cx="12.8" cy="12.8" r="5.9" fill={GREEN} stroke="none" />
        <path d="M10.3 12.8 12.2 14.6 15.3 11.3" stroke="#fff" strokeWidth="1.5" />
      </g>
    )}
  </svg>
);

function TitleSection() {
  return (
    <TitleBar>
      <TitleLeft>
        <svg width="16" height="16" viewBox="0 0 16 16" fill="none" stroke="#fff" strokeWidth="1.1">
          <path d="M.5.5H15.5V15.5H2.5L.5 13.5ZM3.5.5V6.5H12.5V.5M4.5 15.5V10.5H11.5V15.5M6.5 13V15.5" />
        </svg>
        <Spacer $w={15} />
        <svg width="15" height="16" viewBox="0 0 15 16" fill="none" stroke="#d8d8d8" strokeWidth="1.2">
          <path d="M1 .8V6.3H6.5M1 6.3 4.5 2.7C8 .3 13.5 2 13.5 6.5 13.5 9 12 10.5 7 15.5" />
        </svg>
        <Spacer $w={15} />
        <svg width="15" height="16" viewBox="0 0 15 16" fill="none" stroke="#6c6b6a" strokeWidth="1.2">
          <path d="M14 .8V6.3H8.5M14 6.3 10.5 2.7C7 .3 1.5 2 1.5 6.5 1.5 9 3 10.5 8 15.5" />
        </svg>
        <Text $ml={9} $color="#fff" $lh={22} $ls={-0.23} $pt={7}>marriage • Last saved: 1/29/2025 at 11:05 AM</Text>
        <Spacer $w={7} />
        <svg width="8" height="5" viewBox="0 0 8 5"><path d="M0 0H8L4 5Z" fill="#fff" /></svg>
      </TitleLeft>
      <TitleSearch>
        <Magnifier size={16} color="#3b3a39" />
        <Text $size={13.5} $ml={11} $color="#1c5b52" $ls={-0.3}>Search</Text>
      </TitleSearch>
      <TitleRight>
        <Text $color="#fff" $ls={-0.1} $pt={1}>Sign in</Text>
        <Spacer $w={10} />
        <svg width="20" height="20" viewBox="0 0 20 20">
          <circle cx="10" cy="10" r="10" fill="#fff" />
          <circle cx="10" cy="5.8" r="2.8" fill="none" stroke="#222" strokeWidth="1.4" />
          <path d="M4.5 10.8H15.5C15.5 18.5 4.5 18.5 4.5 10.8Z" fill="none" stroke="#222" strokeWidth="1.4" />
        </svg>
        <Spacer $w={32} />
        <svg width="98" height="11" viewBox="0 0 98 11" fill="none" stroke="#fff">
          <path d="M0 5.5H10M44.5.5H53.5V10H44.5ZM88 .5 97.5 10.5M97.5.5 88 10.5" />
        </svg>
      </TitleRight>
    </TitleBar>
  );
}

const tabs = [
  ["File", 50, 8], ["Home", 68, 0, { active: true, bold: true }], ["Insert", 67, 0], ["Modeling", 90, 0, { ls: 0 }], ["View", 63, 0],
  ["Optimize", 85, 0], ["Help", 62, 0], ["Format", 74, 5, { context: true, bold: true }],
  ["Data / Drill", 100, 0, { context: true, bold: true, ls: 0.05 }],
];

function RibbonSection() {
  return (
    <Ribbon>
      <Group $w={161}>
        <GroupBody $pl={8}>
          <RibbonItem $w={40} $off>
            {ribbonIcons.paste}
            <ItemLine $first $off>Paste</ItemLine>
          </RibbonItem>
          <ClipList>
            <ClipRow>
              <Ic w={16}>
                <g opacity=".5"><path d="M4 0 10 11M10 0 4 11" /><circle cx="3" cy="13" r="2.3" stroke="#1979c4" /><circle cx="11" cy="13" r="2.3" stroke="#1979c4" /></g>
              </Ic>
              <Text $color="#bebcba">Cut</Text>
            </ClipRow>
            <ClipRow>
              <Ic w={16}>
                <g opacity=".5"><path d="M4 14.5H-1.5V.5H5L6.5 2M4.5 3.5H9.5L13.5 7.5V15.5H4.5ZM9.5 3.5V7.5H13.5M6.5 10.5H11.5M6.5 12.5H11.5" /></g>
              </Ic>
              <Text $color="#bebcba">Copy</Text>
            </ClipRow>
            <ClipRow>
              <Ic w={16}>
                <g transform="translate(-.5 0)">
                  <path d="M0 6.5C3.2 6.5 4.2 5 5.7 4L10.7 9.5C8.7 11.5 7.7 13 6.2 15.5 3.2 13.5 1.2 11 0 6.5Z" fill="#fcd9a4" stroke="#d9691a" strokeWidth="1.3" />
                  <path d="M3.7 9 6.2 15 9.2 10.5Z" fill="#e8771c" stroke="none" />
                  <path d="M5.7 4 7.7 2 9.7 4 13.2 .5 14.7 2 11.2 5.5 12.7 7.5 10.7 9.5Z" fill="#fff" strokeWidth="1.2" />
                </g>
              </Ic>
              <Text $ls={-0.4}>Format painter</Text>
            </ClipRow>
          </ClipList>
        </GroupBody>
        <GroupName>Clipboard</GroupName>
      </Group>
      {ribbonGroups.map((g) => (
        <Group key={g.name} $w={g.w}>
          <GroupBody $pl={g.pl}>
            {g.items.map(([icon, w, a, b, caret, off]) => (
              <RibbonItem key={icon} $w={w} $off={off}>
                {ribbonIcons[icon]}
                <ItemLine $first $off={off} $tight={icon === "transform"}>{a}</ItemLine>
                <ItemLine>{b}{caret && <Caret />}</ItemLine>
              </RibbonItem>
            ))}
          </GroupBody>
          <GroupName>{g.name}</GroupName>
        </Group>
      ))}
      <Collapse>
        <svg width="9" height="6" viewBox="0 0 9 6" fill="none" stroke="#323130" strokeWidth="1.6"><path d="M.7 5 4.5 1.2 8.3 5" /></svg>
      </Collapse>
    </Ribbon>
  );
}

function VisualizationsPane() {
  return (
    <Pane>
      <PaneHeader>
        <Text $size={15.5} $weight={600} $ls={-0.28} $lh={22}>Visualizations</Text>
        <DoubleChevron />
      </PaneHeader>
      <Text $weight={600} $ml={8} $ls={-0.3}>Build visual</Text>
      <BuildTabs>
        <BuildTab $active $mr={35}>
          <svg width="26" height="26" viewBox="0 0 26 26" fill={GREEN} stroke={K}>
            <path d="M2 1.5H21" stroke="#222" strokeWidth="1.2" />
            <rect x="2" y="6.5" width="22" height="7" strokeDasharray="2 1" />
            <rect x="2" y="17.5" width="22" height="7" strokeDasharray="2 1" />
          </svg>
        </BuildTab>
        <BuildTab $mr={33}>
          <Ic w={24}>
            <path d="M5 18.5H1.5V9.5H6.5M6.5 18V1.5H12.5V14M12.5 5.5H17.5V9" stroke="#605e5c" strokeWidth="1.3" />
            <path d="M22.5 7.5C19 9 15 13 13 16.5L15.5 18.5C19 15.5 22 11 22.5 7.5ZM13 16.5C9.5 16.5 10 20.5 5.5 22.5 10 23.5 15 22.5 15.5 18.5Z" strokeWidth="1.2" fill="#fff" />
          </Ic>
        </BuildTab>
        <BuildTab $mr={0}>
          <Ic w={26}>
            <circle cx="11" cy="11" r="9.5" strokeWidth="1.4" />
            <path d="M2 12 8 7.5 11.5 10 19 5.5M6.5 14V19M10 12.5V20M13.5 13V19.5M17 10V17" strokeWidth="1.4" />
            <path d="M18 18 24.5 24.5" strokeWidth="3" />
          </Ic>
        </BuildTab>
      </BuildTabs>
      <svg width="180" height="10" viewBox="0 0 180 10" fill="none" stroke="#8a8886">
        <path d="M0 9.5H16.5L24 1.5 31.5 9.5H180" />
      </svg>
      <VisualGrid>
        {visuals.map((v, i) => <VisualCell key={i} $active={i === 22}>{v}</VisualCell>)}
      </VisualGrid>
      <MoreDots><Dot /><Dot $c="#a0503c" /><Dot /></MoreDots>
      <Wells>
        <WellList>
          <WellLabel $mt={9}>Value</WellLabel>
          <Well $filled>
            <Chip>
              <Text $ls={-0.3}>Sum of Marriage Dur...</Text>
              <Spacer $w={8} />
              <svg width="28" height="10" viewBox="0 0 28 10" fill="none" strokeWidth="1.1">
                <path d="M.5 2.5 6.5 8 12.5 2.5" stroke="#2b6cb0" />
                <path d="M18.5 1 26 9M26 1 18.5 9" stroke="#44465c" />
              </svg>
            </Chip>
          </Well>
          <WellLabel $mt={11}>Minimum value</WellLabel>
          <Well><Text $ls={-0.27}>Add data fields here</Text></Well>
          <WellLabel $mt={10}>Maximum value</WellLabel>
          <Well><Text $ls={-0.27}>Add data fields here</Text></Well>
          <WellLabel $mt={10}>Target value</WellLabel>
        </WellList>
        <ScrollThumb />
      </Wells>
    </Pane>
  );
}

function TaskbarSection() {
  return (
    <Taskbar>
      <StartButton>
        <svg width="16" height="16" viewBox="0 0 16 16" fill="#fff"><path d="M0 2.2 6.8 1.2V7.5H0ZM7.7 1.1 16 0V7.5H7.7ZM0 8.5H6.8V14.8L0 13.8ZM7.7 8.5H16V16L7.7 14.9Z" /></svg>
      </StartButton>
      <TaskSearch>
        <Magnifier size={17} color="#222" w={1.3} />
        <Text $size={15} $ml={11} $ls={-0.5} $lh={20} $color="#3a3a3a">Type here to search</Text>
        <Spacer $w={48} />
        <svg width="62" height="26" viewBox="0 0 62 26">
          <defs><linearGradient id="spark" x1="0" y1="0" x2="1" y2="1"><stop offset="0" stopColor="#ffe14d" /><stop offset="1" stopColor="#f2a900" /></linearGradient></defs>
          <SparkShape x={4} y={21} s={3.8} fill="#1a9fe8" />
          <SparkShape x={23} y={13} s={11} fill="url(#spark)" />
          <SparkShape x={46} y={16} s={5.5} fill="#f8c028" />
          <circle cx="39.5" cy="3" r="2.1" fill="#f0642c" />
          <circle cx="58" cy="22.5" r="2.1" fill="#8cc63f" />
        </svg>
      </TaskSearch>
      <TaskItem $mr={3}>
        <svg width="16" height="16" viewBox="0 0 16 16" fill="none" stroke="#fff" strokeWidth="1.2">
          <path d="M.5 0V2.5H10.5V0M.5 16V13.5H10.5V16M.5 4.5H10.5V11.5H.5ZM14.5 0V3M14.5 8V16" /><path d="M13 4.5h3v2.5h-3z" fill="#fff" stroke="none" />
        </svg>
      </TaskItem>
      <TaskItem><CopilotMark size={24} id="tc" /></TaskItem>
      <TaskItem>
        <svg width="25" height="25" viewBox="0 0 25 25">
          <defs>
            <linearGradient id="edge1" x1="0" y1="0" x2="1" y2=".4"><stop offset="0" stopColor="#1cb0e8" /><stop offset=".6" stopColor="#2fc2d0" /><stop offset="1" stopColor="#5fdc5c" /></linearGradient>
            <linearGradient id="edge2" x1="0" y1="0" x2="0" y2="1"><stop offset="0" stopColor="#1790dc" /><stop offset="1" stopColor="#0c4a9c" /></linearGradient>
          </defs>
          <circle cx="12.5" cy="12.5" r="12" fill="url(#edge2)" />
          <path d="M.5 12C1 5 6 .5 12.5.5 19.5.5 24.5 5.5 24.5 11 24.5 15 21.5 17 18 17 15 17 14 16 14.5 14.8 16 12.5 15 9 11 8.5 6 8 1.5 9.5.5 12Z" fill="url(#edge1)" />
          <path d="M11 9C14.5 9.5 15.5 12 14.5 14.5 13.5 16.5 16 17.5 19 17 21.5 17 23 16 23.5 16.5 22 20 18 22 14.5 20 9 17 8 12 11 9Z" fill="#001520" />
        </svg>
      </TaskItem>
      <RunningItem>
        <svg width="22" height="20" viewBox="0 0 22 20"><path d="M0 1.5H7L9 3.5H22V18H0Z" fill="#e9a520" /><path d="M0 5H22V18.5H0Z" fill="#ffd966" /><path d="M4 11.5H18V20H14.5V16H7.5V20H4Z" fill="#2f8fdc" /></svg>
      </RunningItem>
      <TaskItem>
        <svg width="23" height="24" viewBox="0 0 23 24"><path d="M0 6H23V20.5Q23 23.5 20 23.5H3Q0 23.5 0 20.5Z" fill="#f4f6f8" /><path d="M6 6V1.5H17V6" fill="none" stroke="#2ca3e8" strokeWidth="2" /><path d="M7 10h4v4h-4z" fill="#f25022" /><path d="M12 10h4v4h-4z" fill="#7fba00" /><path d="M7 15h4v4h-4z" fill="#00a4ef" /><path d="M12 15h4v4h-4z" fill="#ffb900" /></svg>
      </TaskItem>
      <TaskItem>
        <svg width="24" height="23" viewBox="0 0 24 23"><path d="M3 7 14 0 24 7.5V20Q24 22 22 22H4Q3 22 3 20Z" fill="#1460b8" /><path d="M14 3 22 7V13L8 18V7Z" fill="#2fa8e8" /><path d="M3 22 24 9V20Q24 22 22 22Z" fill="#50c8f4" /><path d="M3 14 18 22H4Q3 22 3 20Z" fill="#2490dc" /><rect y="4" width="14" height="14" rx="1.5" fill="#0f6cbd" /><ellipse cx="7" cy="11" rx="3.2" ry="3.6" fill="none" stroke="#fff" strokeWidth="1.8" /></svg>
      </TaskItem>
      <TaskItem><ChromeMark /></TaskItem>
      <RunningItem><ChromeMark badge /></RunningItem>
      <OpenItem $bg="linear-gradient(90deg, #33454e 0 44px, #24363f 44px)" $line="#76b9ed">
        <svg width="20" height="24" viewBox="0 0 20 24"><path d="M10 0H19.5V24H10Z" fill="#d9960a" /><path d="M5 6H14V24H5Z" fill="#f2c02c" /><path d="M0 12H8.5V24H0Z" fill="#fbe07c" /></svg>
      </OpenItem>
      <RunningItem>
        <svg width="34" height="28" viewBox="-1 0 34 28">
          <path d="M5 24.5 6.7 18.5A11 11 0 1 1 10.8 22.8Z" fill="#001520" stroke="#25d366" strokeWidth="2.2" />
          <path d="M12 7.5C13 6.5 14 7 14.3 8L15 9.8C15.2 10.5 14 11.3 14.2 11.8 15 13.5 16.5 14.8 18 15.3 18.5 15.4 19.2 14 19.8 14.2L22 15.3C22.5 15.7 21.8 18 19.5 18.2 15 18.2 10.5 12.5 11 9.5 11 8.7 11.5 8 12 7.5Z" fill="#25d366" />
          <circle cx="29" cy="21" r="8" fill="#242c30" stroke="#777" />
          <text x="29" y="25" textAnchor="middle" fontFamily="Open Sans, sans-serif" fontSize="11.5" fontWeight="600" fill="#fff">1</text>
        </svg>
      </RunningItem>
      <OpenItem $bg="#9c5a24" $line="#ff7a0c">
        <svg width="22" height="23" viewBox="0 0 22 23">
          <defs><linearGradient id="photo" x1="0" y1="0" x2="1" y2="0"><stop offset="0" stopColor="#1c6ac8" /><stop offset="1" stopColor="#6a4cb8" /></linearGradient></defs>
          <rect width="22" height="22.5" rx="2" fill="url(#photo)" /><path d="M0 20 10 9Q11.5 7.5 13 9L22 18V20.5Q22 22.5 20 22.5H2Q0 22.5 0 20Z" fill="#2c9ee8" /><path d="M0 20 10 9Q11.5 7.5 13 9L15.5 11.5 5 22.5H2Q0 22.5 0 20Z" fill="#6bd4f8" /><circle cx="16" cy="4.5" r="2" fill="#fff" />
        </svg>
      </OpenItem>
      <Tray>
        <svg width="20" height="20" viewBox="0 0 20 20">
          <defs><linearGradient id="sun" x1="0" y1="0" x2="1" y2="1"><stop offset="0" stopColor="#ffc800" /><stop offset="1" stopColor="#e8600c" /></linearGradient></defs>
          <circle cx="10" cy="10" r="10" fill="url(#sun)" />
        </svg>
        <Text $size={14} $ml={10} $color="#fff" $lh={20} $ls={-0.25}>21°C  Sunny</Text>
        <Spacer $w={25} />
        <svg width="132" height="18" viewBox="0 0 132 18" fill="none" stroke="#fff" strokeWidth="1.2">
          <path d="M.5 12 6.5 6 12.5 12" strokeWidth="1.4" />
          <path d="M27 2.5C28.5 1.5 32.5 1.5 34 2.5M27 15.5C28.5 16.5 32.5 16.5 34 15.5M26.5 5.5H33.5V12.5H26.5ZM33.5 8 36 6.5V11.5L33.5 10" />
          <path d="M54 13.5H47.5V4.5L61.5 2V9M51 14.5H46.5" /><path d="M56.5 6.5C54 5 51.5 6.5 52 9M52 9 50.5 7.5M52 9 53.5 7.8M52.5 11.5H56" />
          <circle cx="59" cy="13.5" r="3.5" fill="#ff9800" stroke="none" />
          <path d="M71.5 5.5H84V12.5H71.5Z" /><path d="M73.5 7.3H79.5V10.7H73.5ZM85 7.5h1.5v3h-1.5z" fill="#fff" stroke="none" />
          <g stroke="#d0d6da"><path d="M97 15C97 8 102 3.5 109.5 3.5M100 15.3C100 10 104 6.5 109.5 6.5M103 15.3C103 12 106 9.5 109.5 9.5M106 15.3C106 13.5 107.5 12.5 109.5 12.5" /></g><circle cx="108.5" cy="14.5" r="1.3" fill="#fff" stroke="none" />
          <path d="M118 7V11.5H120.5L124 14.5V4L120.5 7ZM126.5 7 131.5 12M131.5 7 126.5 12" />
        </svg>
        <Clock>
          <Text $color="#fff" $lh={18} $ls={-0.4}>8:08 AM</Text>
          <Text $color="#fff" $lh={18} $ls={-0.4}>2/13/2025</Text>
        </Clock>
        <Spacer $w={15} />
        <svg width="17" height="17" viewBox="0 0 17 17" fill="none" stroke="#fff" strokeWidth="1.2"><path d="M.7 1.5H16.3V12.5H11.5L8.5 15.5 5.5 12.5H.7Z" /></svg>
        <TrayEdge />
      </Tray>
    </Taskbar>
  );
}

export default function App() {
  return (
    <Window>
      <GlobalStyle />
      <TitleSection />
      <TabBar>
        {tabs.map(([name, w, mr, o = {}]) => (
          <Tab key={name} $w={w} $mr={mr} $context={o.context}>
            <TabLabel $active={o.active} $bold={o.bold} $context={o.context} $ls={o.ls}>{name}</TabLabel>
          </Tab>
        ))}
        <ShareButton>
          <svg width="16" height="16" viewBox="0 0 16 16" fill="none" stroke="#fff" strokeWidth="1.2">
            <path d="M.7 4.5V15H12V11.5M9.5 1 15.3 5.8 9.5 10.5V8C6.5 8 4.5 9 3.5 11.5 3.5 7 6 4 9.5 3.8Z" />
          </svg>
          <Text $ml={8} $color="#fff" $ls={-0.4} $lh={17}>Share</Text>
          <Spacer $w={4} />
          <svg width="10" height="6" viewBox="0 0 10 6" fill="none" stroke="#fff" strokeWidth="1.2"><path d="M.5.5 5 5 9.5.5" /></svg>
        </ShareButton>
      </TabBar>
      <RibbonSection />
      <Workspace>
        <Rail>
          <RailItem $active $pl={10}>
            <Ic w={16}><path d="M.8 1V15H15M3.5 12.5V4.5H6V12.5ZM7.5 12.5V8.5H9.5V12.5ZM11 12.5V2.5H13.5V12.5Z" stroke="#111" strokeWidth="1.4" /></Ic>
          </RailItem>
          <RailItem $pl={13} $pb={2}>
            <Ic w={16}><path d="M.5 1.5H15.5V15.5H.5ZM.5 4.5H15.5M.5 8.5H15.5M.5 12H15.5M5.5 4.5V15.5M10.5 4.5V15.5" stroke={G} /></Ic>
          </RailItem>
          <RailItem $pl={12}>
            <Ic w={18}><path d="M.5 6.5H8V13H.5ZM.5 9.5H8M10.5 1.5H17.5V7.5H10.5ZM10.5 4H17.5M10.5 11.5H17.5V17.5H10.5ZM10.5 14H17.5M5 6.5V3.5H10.5M5 13V15.5H10.5" stroke={G} /></Ic>
          </RailItem>
          <RailItem $pl={11}>
            <svg width="18" height="18" viewBox="0 0 18 18" fill="none" stroke={G} strokeWidth="1.2">
              <path d="M4.5 10V1.5H10L13.5 5V13M10 1.5V5H13.5M14 3.5 16.5 6.5V13.5L14 15.5" />
              <text x="-.5" y="16.2" fontFamily="Open Sans, sans-serif" fontSize="6.5" fontWeight="700" fill={G} stroke="none" letterSpacing="0">DAX</text>
            </svg>
          </RailItem>
        </Rail>
        <Canvas>
          <FocusHeader>
            <BackButton>
              <svg width="9" height="16" viewBox="0 0 9 16" fill="none" stroke="#605e5c" strokeWidth="1.3"><path d="M8.3.5 1 8 8.3 15.5" /></svg>
              <Text $ml={16} $color="#605e5c" $ls={-0.33} $pt={2}>Back to report</Text>
            </BackButton>
            <HeaderRule />
            <VisualTitle>SUM OF MARRIAGE DURATION (YEARS) AND SUM OF CHILDREN</VisualTitle>
            <VisualActions>
              <ActionButton>
                <svg width="16" height="15" viewBox="0 0 16 15" fill="none" stroke="#d8b8e0" strokeWidth="1.2"><path d="M.8 1H15.2V3L9.5 8.5V13.5H6.5V8.5L.8 3Z" /></svg>
              </ActionButton>
              <ActionButton>
                <svg width="16" height="3" viewBox="0 0 16 3" fill="#c8a3cf"><circle cx="2" cy="1.5" r="1.4" /><circle cx="8" cy="1.5" r="1.4" /><circle cx="14" cy="1.5" r="1.4" /></svg>
              </ActionButton>
            </VisualActions>
          </FocusHeader>
          <GaugeCard><Gauge /></GaugeCard>
        </Canvas>
        <FiltersPane>
          <DoubleChevron left />
          <Spacer $w={1} $h={16} />
          <svg width="12" height="12" viewBox="-1 0 12 12" fill="none" stroke="#323130" strokeWidth="1.2"><path d="M11.3.7V11.3L6.5 8H.8V4.5H6.5Z" /></svg>
          <FiltersLabel>Filters</FiltersLabel>
        </FiltersPane>
        <VisualizationsPane />
        <Pane>
          <PaneHeader>
            <Text $size={15.5} $weight={600} $ls={-0.35} $lh={22}>Data</Text>
            <DoubleChevron />
          </PaneHeader>
          <DataSearch>
            <Magnifier size={14} color="#605e5c" flip />
            <Text $size={13.5} $color="#605e5c" $ls={-0.3} $lh={18}>Search</Text>
          </DataSearch>
          {[["employee_attrition_da...", false], ["marriage_divorce_indi...", true], ["sample superstore", false]].map(([name, checked]) => (
            <TableRow key={name}>
              <svg width="8" height="12" viewBox="0 0 8 12" fill="none" stroke="#605e5c" strokeWidth="1.1"><path d="M1 .5 7 6 1 11.5" /></svg>
              <Spacer $w={5} />
              <TableGlyph checked={checked} />
              <Text $ml={1} $ls={-0.38}>{name}</Text>
            </TableRow>
          ))}
        </Pane>
      </Workspace>
      <StatusBar>
        <Text $color="#484644" $ls={-0.2} $pt={1}>Page 4 of 5</Text>
        <Fill />
        <Text $size={14} $weight={600} $ls={0}>-</Text>
        <ZoomTrack><ZoomThumb /></ZoomTrack>
        <Text $size={14} $ls={0}>+</Text>
        <Spacer $w={13} />
        <Text $color="#605e5c" $ls={-0.4}>100%</Text>
        <Spacer $w={13} />
        <svg width="16" height="12" viewBox="0 0 16 12" fill="none" stroke="#605e5c"><path d="M.5.5H15.5V11.5H.5Z" /><path d="M3 5V3H5.5M10.5 3H13V5M13 7.5V9.5H10.5M5.5 9.5H3V7.5" strokeWidth="1.2" /></svg>
      </StatusBar>
      <TaskbarSection />
    </Window>
  );
}
